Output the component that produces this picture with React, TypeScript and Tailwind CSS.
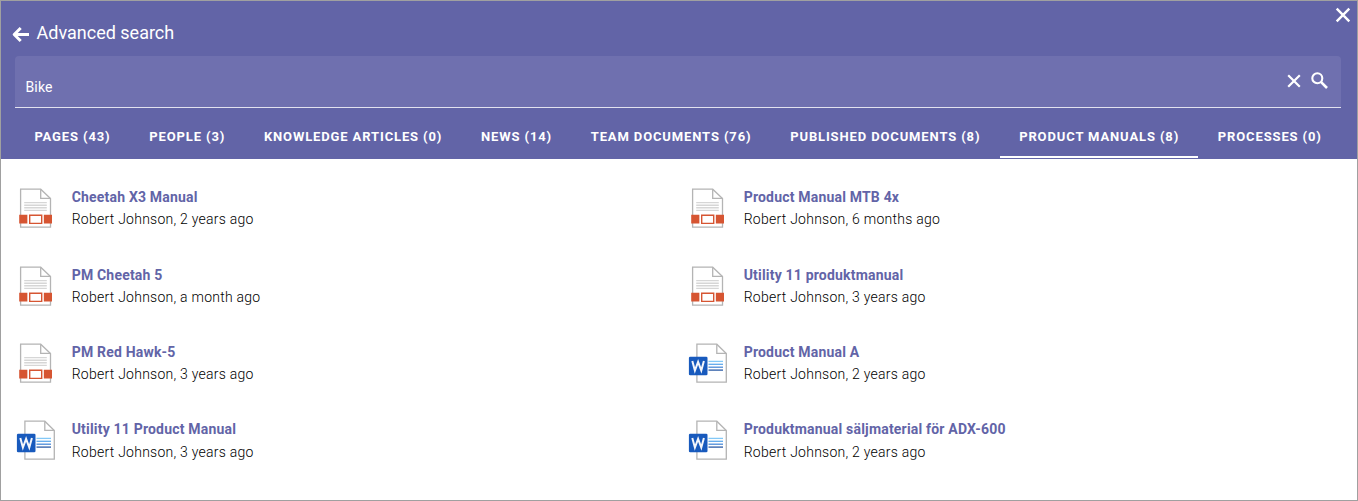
type Doc = { title: string; meta: string; kind: "publication" | "word" };

const tabs = [
  "Pages (43)",
  "People (3)",
  "Knowledge articles (0)",
  "News (14)",
  "Team documents (76)",
  "Published documents (8)",
  "Product manuals (8)",
  "Processes (0)",
];
const activeTab = 6;

const docs: Doc[] = [
  { title: "Cheetah X3 Manual", meta: "Robert Johnson, 2 years ago", kind: "publication" },
  { title: "Product Manual MTB 4x", meta: "Robert Johnson, 6 months ago", kind: "publication" },
  { title: "PM Cheetah 5", meta: "Robert Johnson, a month ago", kind: "publication" },
  { title: "Utility 11 produktmanual", meta: "Robert Johnson, 3 years ago", kind: "publication" },
  { title: "PM Red Hawk-5", meta: "Robert Johnson, 3 years ago", kind: "publication" },
  { title: "Product Manual A", meta: "Robert Johnson, 2 years ago", kind: "word" },
  { title: "Utility 11 Product Manual", meta: "Robert Johnson, 3 years ago", kind: "word" },
  { title: "Produktmanual säljmaterial för ADX-600", meta: "Robert Johnson, 2 years ago", kind: "word" },
];

function PublicationIcon() {
  return (
    <svg width="40" height="40" viewBox="0 0 40 40" fill="none">
      <path d="M4.6 1.2H24.7L34.5 10.6V39.2H4.6Z" fill="#fff" stroke="#b4b4b4" strokeWidth="1.3" />
      <path d="M24.7 1.2V10.4H34.5" stroke="#b4b4b4" strokeWidth="1.3" />
      <path d="M8.2 14.6H30.8M8.2 17.2H30.8M8.2 19.8H30.8M8.2 22.4H30.8" stroke="#d6d6d6" strokeWidth="1.4" />
      <path d="M3.2 26.8H11.6V35.4H3.2ZM27.6 26.8H36V35.4H27.6Z" fill="#d65532" />
      <path d="M11.6 26H27.6V36.6H11.6Z" fill="#fff" />
      <path d="M13.7 27.2H25.7V35.4H13.7Z" fill="#fff" stroke="#d65532" strokeWidth="1.4" />
    </svg>
  );
}

function WordIcon() {
  return (
    <svg width="40" height="40" viewBox="0 0 40 40" fill="none">
      <path d="M8.9 1.2H28.8L38.3 10.6V39.2H8.9Z" fill="#fff" stroke="#b4b4b4" strokeWidth="1.3" />
      <path d="M28.8 1.2V10.4H38.3" stroke="#b4b4b4" strokeWidth="1.3" />
      <path d="M20.5 18.4H35" stroke="#83c8f7" strokeWidth="1.3" />
      <path d="M20.5 21.3H35" stroke="#5fa9ec" strokeWidth="1.3" />
      <path d="M20.5 24.2H35" stroke="#4b8bd8" strokeWidth="1.3" />
      <path d="M20.5 27.1H35" stroke="#2a5aa5" strokeWidth="1.3" />
      <rect x=".9" y="13.7" width="18.6" height="18.6" rx="1.3" fill="#185abd" />
      <path d="M4.3 18L6.9 27.5L10.1 18.8L13.3 27.5L15.9 18" stroke="#f4f6fb" strokeWidth="2" />
    </svg>
  );
}

export default function App() {
  return (
    <div className="h-[501px] w-full border border-[#a0a0a0] bg-white font-[Roboto,sans-serif]">
      <header className="flex h-[158px] flex-col bg-[#6264a7] text-white">
        <div className="flex h-[55px] justify-between">
          <div className="flex items-center pt-[9px] pl-[10px]">
            <svg width="19" height="18" viewBox="0 0 19 18" className="mt-[3px]" fill="none" stroke="#fff" strokeWidth="3">
              <path d="M9.7 2L3.2 8.5L9.7 15M3.2 8.5H18" strokeLinejoin="round" />
            </svg>
            <h1 className="ml-[6.5px] text-[18px] leading-6">Advanced search</h1>
          </div>
          <button className="mt-[6px] mr-[6px] h-4 w-4">
            <svg width="16" height="16" viewBox="0 0 16 16" stroke="#fff" strokeWidth="2.4">
              <path d="M1.7 1.7L14.3 14.3M14.3 1.7L1.7 14.3" />
            </svg>
          </button>
        </div>
        <div className="mr-4 ml-[14px] flex h-[52px] justify-between rounded-t border-b border-white/80 bg-[#6f70af] pr-[13px] pl-[10.5px]">
          <span className="pt-[21px] text-sm leading-5 tracking-[0.15px]">Bike</span>
          <div className="flex items-start gap-[9px] pt-4">
            <svg width="14" height="14" viewBox="0 0 14 14" className="mt-[2px] mr-px" stroke="#fff" strokeWidth="2.2">
              <path d="M1.2 1.2L12.8 12.8M12.8 1.2L1.2 12.8" />
            </svg>
            <svg width="17" height="17" viewBox="0 0 17 17" fill="none" stroke="#fff">
              <circle cx="6.3" cy="6.3" r="5" strokeWidth="2.1" />
              <path d="M9.9 9.9L16 16" strokeWidth="2.6" />
            </svg>
          </div>
        </div>
        <nav className="ml-[14px] flex h-[50px]">
          {tabs.map((tab, i) => (
            <button
              key={tab}
              className={
                "flex items-start border-b-2 px-[19.4px] pt-[19px] text-[13px] leading-5 font-bold tracking-[0.87px] whitespace-nowrap uppercase " +
                (i === activeTab ? "border-white" : "border-transparent")
              }
            >
              {tab}
            </button>
          ))}
        </nav>
      </header>
      <main className="grid grid-cols-[672px_672px] auto-rows-[77.4px] pt-[27.2px] pl-[15px]">
        {docs.map((doc) => (
          <article key={doc.title} className="flex">
            <div className="mt-[2px] h-10 w-10">{doc.kind === "word" ? <WordIcon /> : <PublicationIcon />}</div>
            <div className="ml-[15.7px]">
              <h2 className="text-sm leading-[22.15px] font-bold tracking-[0.19px] text-[#6264a7]">{doc.title}</h2>
              <p className="text-sm leading-[22px] font-light tracking-[0.25px] text-black">{doc.meta}</p>
            </div>
          </article>
        ))}
      </main>
    </div>
  );
}
